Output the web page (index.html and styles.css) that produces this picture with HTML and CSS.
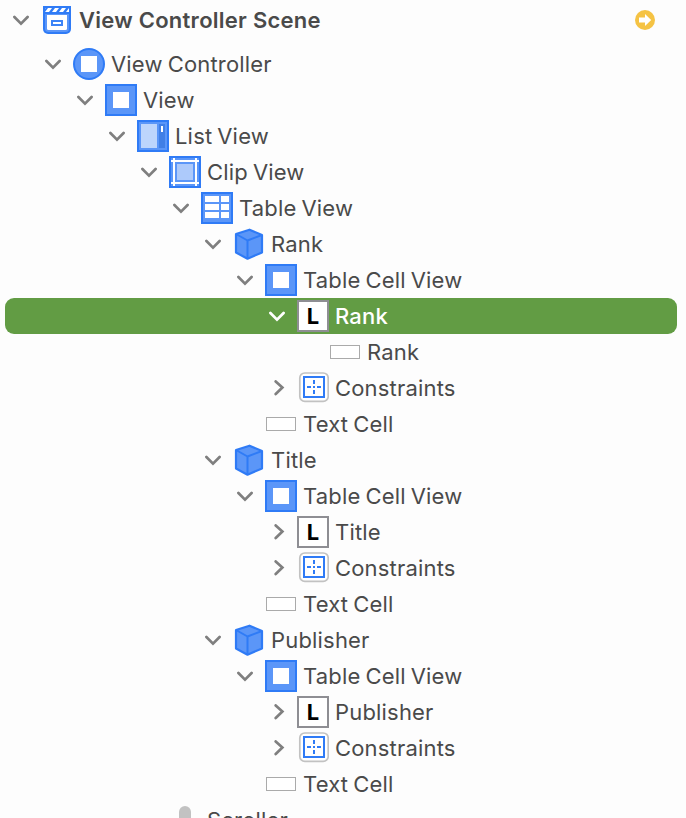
FILE: index.html
```html
<!DOCTYPE html>
<html lang="en">
<head>
<meta charset="utf-8">
<title>Document Outline</title>
<link rel="stylesheet" href="styles.css">
</head>
<body>
<svg class="defs" aria-hidden="true">
  <symbol id="down" viewBox="0 0 16 16"><path d="M1.400 5 8 11.600l6.600-6.600" fill="none" stroke="currentColor" stroke-width="2.700" stroke-linecap="round"/></symbol>
  <symbol id="right" viewBox="0 0 16 16"><path d="M6.700 1.400 13.400 7.600 6.700 14" fill="none" stroke="currentColor" stroke-width="2.700" stroke-linecap="round"/></symbol>
  <symbol id="scene" viewBox="0 0 32 32">
    <path d="M2 2h28v23a5 5 0 0 1-5 5H7a5 5 0 0 1-5-5z" fill="#2f7bf6"/>
    <path d="M4 8l3-4h4L8 8zM11 8l3-4h4l-3 4zM18 8l3-4h4l-3 4zM25 8l3-4v4zM4 4h0.500L4 5z" fill="#fff"/>
    <path d="M4 10h24v14.500a3.500 3.500 0 0 1-3.500 3.500h-17A3.500 3.500 0 0 1 4 24.500z" fill="#5b96f8"/>
    <path d="M6 11h20v13.500a1.500 1.500 0 0 1-1.500 1.500h-17A1.500 1.500 0 0 1 6 24.500z" fill="#fff"/><path d="M11 17h10v4H11z" fill="#fff" stroke="#3d84f7" stroke-width="2"/>
  </symbol>
  <symbol id="controller" viewBox="0 0 32 32"><circle cx="16" cy="16" r="15" fill="#5b96f8" stroke="#2f7bf6" stroke-width="2"/><path d="M8 8h16v16H8z" fill="#fff"/></symbol>
  <symbol id="view" viewBox="0 0 32 32"><path d="M1 1h30v30H1z" fill="#5b96f8" stroke="#2f7bf6" stroke-width="2"/><path d="M8 8h16v16H8z" fill="#fff"/></symbol>
  <symbol id="list" viewBox="0 0 32 32"><path d="M1 1h30v30H1z" fill="#5b96f8" stroke="#2f7bf6" stroke-width="2"/><path d="M4 4h16v24H4z" fill="#bdd5fc"/><path d="M22 4h6v24h-6z" fill="#407fe6"/><path d="M24 6h2v6h-2z" fill="#fff"/></symbol>
  <symbol id="clip" viewBox="0 0 32 32"><path d="M1 1h30v30H1z" fill="#5b96f8" stroke="#2f7bf6" stroke-width="2"/><path d="M5 2v28M27 2v28M2 5h28M2 27h28" stroke="#fff" stroke-width="2"/><path d="M8 8h16v16H8z" fill="#adcafb"/></symbol>
  <symbol id="table" viewBox="0 0 32 32"><path d="M1 1h30v30H1z" fill="#5b96f8" stroke="#2f7bf6" stroke-width="2"/><path d="M4 4h14v6H4zM20 4h8v6h-8zM4 12h14v6H4zM20 12h8v6h-8zM4 20h14v6H4zM20 20h8v6h-8z" fill="#fff"/></symbol>
  <symbol id="cube" viewBox="0 0 32 32"><path d="M16.500 1.700 29 7v17.500L14.500 30.700 3 24.500V6z" fill="#5b96f8" stroke="#2f7bf6" stroke-width="2.200" stroke-linejoin="round"/><path d="M3 6l11.500 6.500V31M14.500 12.500 29 7" fill="none" stroke="#2f7bf6" stroke-width="2"/></symbol>
  <symbol id="constraints" viewBox="0 0 32 32"><rect x="2.800" y="1" width="28.400" height="28.400" rx="5" fill="#fff" stroke="#c2c2c2" stroke-width="1.700"/><path d="M7 5h20v20H7z" fill="#fff" stroke="#2f7bf6" stroke-width="2"/><path d="M17 8v4M17 14v2M17 18v4M10 15h4M16 15h2M20 15h4" stroke="#2f7bf6" stroke-width="2"/></symbol>
</svg>
<main class="outline" id="outline"></main>
<script src="outline.js"></script>
</body>
</html>
```
FILE: styles.css
```css
body {
  margin: 0;
  background: #fdfdfd;
  color: #4a4a4a;
  font: 22px/36px Inter, "Liberation Sans", sans-serif;
  overflow: hidden;
}

.defs {
  display: none;
}

.outline {
  height: 816px;
  padding-top: 2px;
  overflow: hidden;
}

.row {
  display: flex;
  align-items: center;
  height: 36px;
  margin: 0 9px 0 5px;
  padding-left: calc(8px + 32px * var(--depth));
  white-space: nowrap;
}

.header {
  margin-bottom: 8px;
  font-weight: 600;
}

.selected {
  border-radius: 9px;
  background: #629c44;
  color: #fff;
  font-weight: 500;
}

.chevron {
  flex: none;
  width: 16px;
  height: 16px;
  margin-right: 12px;
  color: #7f7f7f;
}

.selected .chevron {
  color: #fff;
}

.icon {
  display: flex;
  flex: none;
  align-items: center;
  justify-content: center;
  width: 32px;
  height: 32px;
  margin-right: 6px;
}

.icon svg {
  width: 32px;
  height: 32px;
}

.letter {
  box-sizing: border-box;
  width: 32px;
  height: 32px;
  border: 2px solid #8e8e93;
  background: #fff;
  color: #000;
  font-size: 22px;
  font-weight: 700;
  line-height: 29px;
  text-align: center;
}

.cell {
  box-sizing: border-box;
  width: 30px;
  height: 14px;
  border: 1px solid #aaa;
  background: #fff;
}

.knob {
  width: 12px;
  height: 28px;
  border-radius: 6px;
  background: #c2c2c2;
}

.label {
  letter-spacing: 0.18px;
  word-spacing: -1.4px;
}

.header .label {
  letter-spacing: 0.26px;
  word-spacing: 0;
}

.badge {
  width: 20px;
  height: 20px;
  margin-left: auto;
  margin-right: 22px;
}
```
FILE: outline.js
```js
// depth, disclosure, icon, label
const rows = [
  [0, "down", "scene", "View Controller Scene"],
  [1, "down", "controller", "View Controller"],
  [2, "down", "view", "View"],
  [3, "down", "list", "List View"],
  [4, "down", "clip", "Clip View"],
  [5, "down", "table", "Table View"],
  [6, "down", "cube", "Rank"],
  [7, "down", "view", "Table Cell View"],
  [8, "down", "letter", "Rank", "selected"],
  [9, "", "cell", "Rank"],
  [8, "right", "constraints", "Constraints"],
  [7, "", "cell", "Text Cell"],
  [6, "down", "cube", "Title"],
  [7, "down", "view", "Table Cell View"],
  [8, "right", "letter", "Title"],
  [8, "right", "constraints", "Constraints"],
  [7, "", "cell", "Text Cell"],
  [6, "down", "cube", "Publisher"],
  [7, "down", "view", "Table Cell View"],
  [8, "right", "letter", "Publisher"],
  [8, "right", "constraints", "Constraints"],
  [7, "", "cell", "Text Cell"],
  [4, "", "knob", "Scroller"]
];

const shapes = {
  letter: '<span class="letter">L</span>',
  cell: '<span class="cell"></span>',
  knob: '<span class="knob"></span>'
};

const badge = '<svg class="badge" viewBox="0 0 20 20"><circle cx="10" cy="10" r="10" fill="#f5c344"/><path d="M4 7.500h6V4l6.200 6-6.200 6v-3.500H4z" fill="#fff"/></svg>';

document.getElementById("outline").innerHTML = rows.map(([depth, arrow, icon, label, state], i) => `
  <div class="row ${i === 0 ? "header" : ""} ${state || ""}" style="--depth: ${depth}">
    <svg class="chevron">${arrow ? `<use href="#${arrow}"/>` : ""}</svg>
    <span class="icon">${shapes[icon] || `<svg><use href="#${icon}"/></svg>`}</span>
    <span class="label">${label}</span>${i === 0 ? badge : ""}
  </div>`).join("");
```
